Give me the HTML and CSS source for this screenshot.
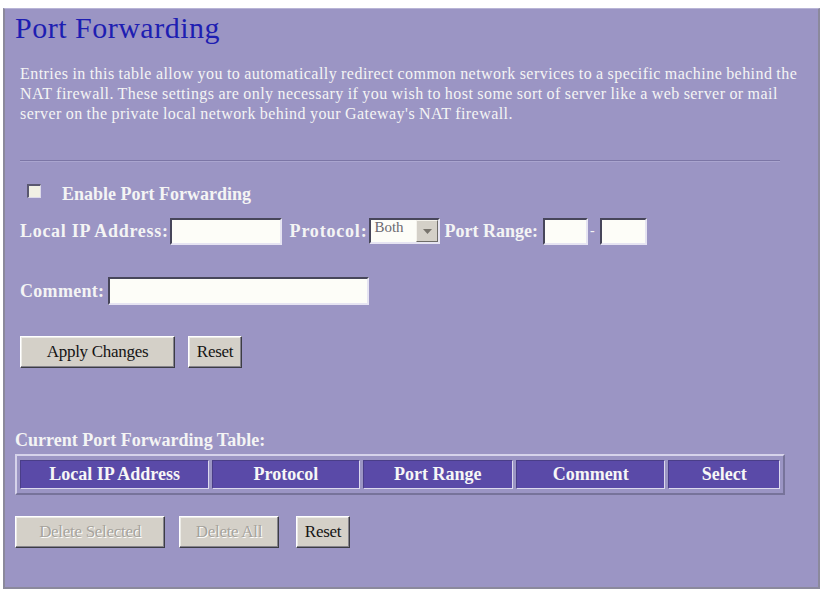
FILE: index.html
```html
<!DOCTYPE html>
<html>
<head>
<meta charset="utf-8">
<title>Port Forwarding</title>
<link rel="stylesheet" href="styles.css">
</head>
<body>
<div class="panel">
  <h1 class="title">Port Forwarding</h1>
  <div class="body">
    <p class="intro">Entries in this table allow you to automatically redirect common network services to a specific machine behind the<br>NAT firewall. These settings are only necessary if you wish to host some sort of server like a web server or mail<br>server on the private local network behind your Gateway's NAT firewall.</p>
    <div class="rule"></div>
    <div class="row enable-row">
      <span class="checkbox"></span>
      <span class="label">Enable Port Forwarding</span>
    </div>
    <div class="row ip-row">
      <span class="label label-ip">Local IP Address:</span>
      <input class="field field-ip" type="text">
      <span class="label label-proto">Protocol:</span>
      <span class="select"><span class="select-value">Both</span><span class="select-arrow"><svg width="9" height="5" viewBox="0 0 9 5"><path d="M0 0 H9 L4.5 5 Z" fill="#77736c"/></svg></span></span>
      <span class="label label-range">Port Range:</span>
      <input class="field field-port1" type="text">
      <span class="dash">-</span>
      <input class="field field-port2" type="text">
    </div>
    <div class="row comment-row">
      <span class="label label-comment">Comment:</span>
      <input class="field field-comment" type="text">
    </div>
    <div class="row btn-row">
      <button class="btn btn-apply">Apply Changes</button>
      <button class="btn btn-reset">Reset</button>
    </div>
  </div>
  <div class="table-title">Current Port Forwarding Table:</div>
  <table class="fwd-table">
    <tr>
      <th class="c-ip">Local IP Address</th>
      <th class="c-proto">Protocol</th>
      <th class="c-range">Port Range</th>
      <th class="c-comment">Comment</th>
      <th class="c-select">Select</th>
    </tr>
  </table>
  <div class="row btn-row2">
    <button class="btn btn-disabled btn-delsel">Delete Selected</button>
    <button class="btn btn-disabled btn-delall">Delete All</button>
    <button class="btn btn-reset2">Reset</button>
  </div>
</div>
</body>
</html>
```

FILE: styles.css
```css
html, body {
  margin: 0;
  padding: 0;
  background: #ffffff;
}
body {
  font-family: "Liberation Serif", "DejaVu Serif", serif;
  color: #f4f4f4;
}
.panel {
  box-sizing: border-box;
  margin: 8px 3px 0 3px;
  width: 817px;
  height: 581px;
  background: #9b95c4;
  border-left: 2px solid #8b899c;
  border-right: 2px solid #8b899c;
  border-bottom: 2px solid #8b899c;
  border-top: 1px solid #b8b4d6;
  padding: 0 0 0 10px;
}
.title {
  margin: 0;
  padding-top: 2px;
  font-size: 30px;
  line-height: 34px;
  font-weight: normal;
  color: #1e1eb2;
  letter-spacing: 0.5px;
}
.body {
  padding-left: 5px;
}
.intro {
  margin: 19px 0 0 0;
  font-size: 16px;
  line-height: 20px;
  white-space: nowrap;
  letter-spacing: 0.45px;
  word-spacing: -0.5px;
}
.rule {
  margin-top: 36px;
  width: 760px;
  height: 0;
  border-top: 1px solid #7c76a6;
  border-bottom: 1px solid #aaa5cf;
}
.row {
  display: flex;
  align-items: center;
}
.label {
  font-weight: bold;
  font-size: 18px;
  white-space: nowrap;
}
.enable-row {
  margin-top: 23px;
  height: 18px;
}
.checkbox {
  box-sizing: border-box;
  width: 14px;
  height: 14px;
  margin-left: 7px;
  margin-right: 21px;
  margin-bottom: 7px;
  background: #f1f0e4;
  border-top: 2px solid #5a5870;
  border-left: 2px solid #5a5870;
  border-right: 1px solid #dcdaea;
  border-bottom: 1px solid #dcdaea;
}
.ip-row {
  margin-top: 14px;
  height: 28px;
}
.label-ip {
  letter-spacing: 0.7px;
}
.field {
  box-sizing: border-box;
  height: 27px;
  margin: 0;
  padding: 0 3px;
  background: #fdfdf8;
  border-top: 2px solid #47465a;
  border-left: 2px solid #47465a;
  border-right: 2px solid #e6e4f2;
  border-bottom: 2px solid #e6e4f2;
  outline: none;
  font-family: "Liberation Serif", serif;
  font-size: 15px;
}
.field-ip {
  width: 112px;
  margin-left: 1px;
}
.label-proto {
  margin-left: 8px;
  letter-spacing: 0.8px;
}
.select {
  display: flex;
  align-items: stretch;
  box-sizing: border-box;
  width: 71px;
  height: 26px;
  margin-left: 2px;
  background: #fdfdf8;
  border-top: 2px solid #47465a;
  border-left: 2px solid #47465a;
  border-right: 2px solid #e6e4f2;
  border-bottom: 2px solid #e6e4f2;
}
.select-value {
  flex: 1;
  color: #6a6870;
  font-size: 15px;
  line-height: 15px;
  padding-left: 3px;
}
.select-arrow {
  display: flex;
  align-items: center;
  justify-content: center;
  width: 22px;
  background: #d4d0c8;
  border-top: 1px solid #f4f2ec;
  border-left: 1px solid #f4f2ec;
  border-right: 1px solid #6e6c68;
  border-bottom: 1px solid #6e6c68;
  box-sizing: border-box;
}
.label-range {
  margin-left: 4px;
}
.field-port1 {
  width: 45px;
  margin-left: 5px;
}
.dash {
  font-size: 14px;
  width: 12px;
  padding-left: 2px;
  box-sizing: border-box;
}
.field-port2 {
  width: 47px;
}
.comment-row {
  margin-top: 32px;
  height: 28px;
}
.label-comment {
  letter-spacing: 0.3px;
}
.field-comment {
  width: 261px;
  height: 28px;
  margin-left: 4px;
}
.btn {
  box-sizing: border-box;
  height: 32px;
  margin: 0;
  padding: 0;
  background: #d4d0c8;
  border-top: 1px solid #ffffff;
  border-left: 1px solid #ffffff;
  border-right: 1px solid #3c3c44;
  border-bottom: 1px solid #3c3c44;
  box-shadow: inset -1px -1px 0 #86848c, inset 1px 1px 0 #ecebe6;
  font-family: "Liberation Serif", serif;
  font-size: 17px;
  color: #141414;
  letter-spacing: -0.3px;
}
.btn-row {
  margin-top: 31px;
}
.btn-apply {
  width: 155px;
}
.btn-reset {
  width: 54px;
  margin-left: 13px;
}
.table-title {
  margin-top: 61px;
  font-weight: bold;
  font-size: 18px;
  line-height: 22px;
}
.fwd-table {
  margin-top: 3px;
  width: 770px;
  border-collapse: separate;
  border-spacing: 3px 4px;
  border-top: 2px solid #d6d3ea;
  border-left: 2px solid #d6d3ea;
  border-right: 2px solid #77739a;
  border-bottom: 2px solid #77739a;
}
.fwd-table th {
  height: 29px;
  padding: 0;
  box-sizing: border-box;
  background: #5a4aa8;
  color: #f6f6f6;
  font-size: 18px;
  font-weight: bold;
  text-align: center;
  border-top: 1px solid #4a3e88;
  border-left: 1px solid #4a3e88;
  border-right: 1px solid #dcd9ee;
  border-bottom: 1px solid #dcd9ee;
}
.c-ip { width: 190px; }
.c-proto { width: 148px; }
.c-range { width: 151px; }
.c-comment { width: 150px; }
.c-select { width: 112px; }
.btn-row2 {
  margin-top: 21px;
}
.btn-disabled {
  color: #a6a39c;
  text-shadow: 1px 1px 0 #ffffff;
}
.btn-delsel {
  width: 150px;
}
.btn-delall {
  width: 100px;
  margin-left: 14px;
}
.btn-reset2 {
  width: 54px;
  margin-left: 17px;
}
```
